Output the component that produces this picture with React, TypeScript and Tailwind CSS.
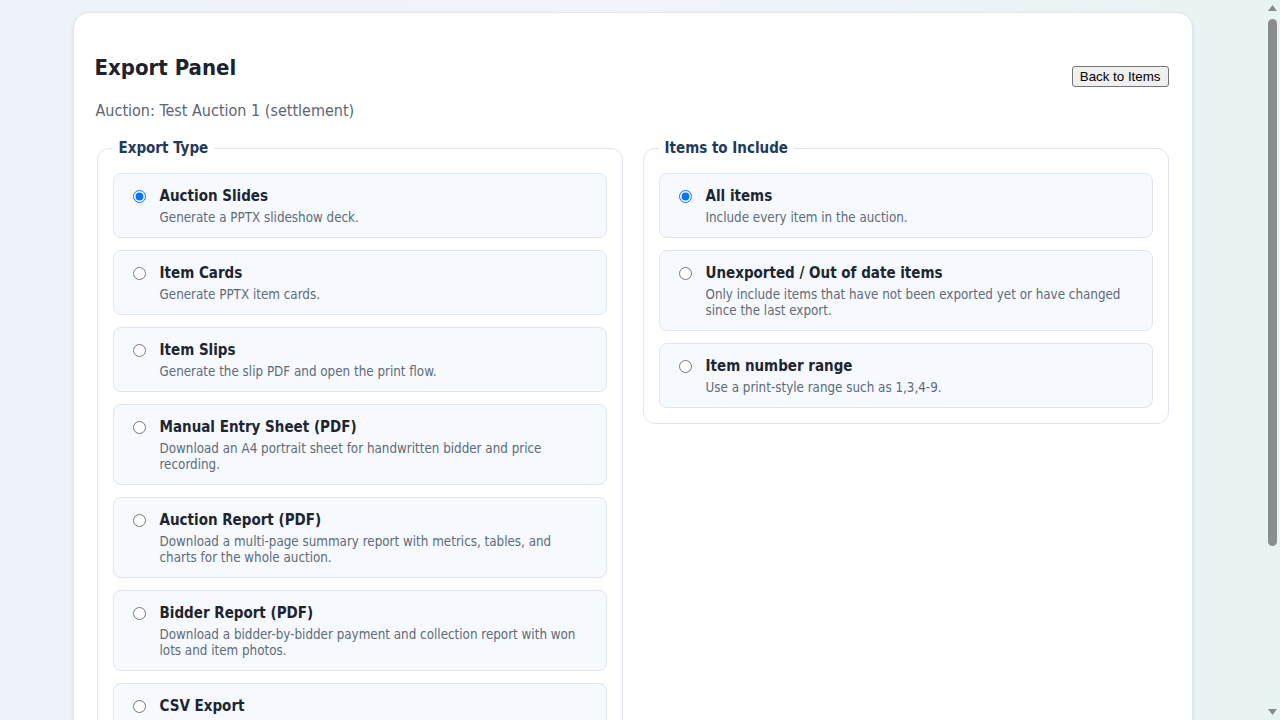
import { useState } from 'react';

type Option = {
    id: string;
    title: string;
    description: string;
};

const exportTypes: Option[] = [
    { id: 'slides', title: 'Auction Slides', description: 'Generate a PPTX slideshow deck.' },
    { id: 'cards', title: 'Item Cards', description: 'Generate PPTX item cards.' },
    { id: 'slips', title: 'Item Slips', description: 'Generate the slip PDF and open the print flow.' },
    {
        id: 'manual',
        title: 'Manual Entry Sheet (PDF)',
        description: 'Download an A4 portrait sheet for handwritten bidder and price recording.',
    },
    {
        id: 'report',
        title: 'Auction Report (PDF)',
        description: 'Download a multi-page summary report with metrics, tables, and charts for the whole auction.',
    },
    {
        id: 'bidders',
        title: 'Bidder Report (PDF)',
        description: 'Download a bidder-by-bidder payment and collection report with won lots and item photos.',
    },
    { id: 'csv', title: 'CSV Export', description: 'Download a CSV file of items, bidders and hammer prices.' },
];

const itemScopes: Option[] = [
    { id: 'all', title: 'All items', description: 'Include every item in the auction.' },
    {
        id: 'changed',
        title: 'Unexported / Out of date items',
        description: 'Only include items that have not been exported yet or have changed since the last export.',
    },
    { id: 'range', title: 'Item number range', description: 'Use a print-style range such as 1,3,4-9.' },
];

const OptionCard = ({
    name,
    option,
    checked,
    onSelect,
}: {
    name: string;
    option: Option;
    checked: boolean;
    onSelect: (id: string) => void;
}) => (
    <label className="flex gap-3.5 rounded-lg border border-[#dfe6ef] bg-[#f6f9fd] pt-3 pb-[11px] pl-[19px] pr-4 cursor-pointer">
        <input
            type="radio"
            name={name}
            checked={checked}
            onChange={() => onSelect(option.id)}
            className="mt-1 h-[13px] w-[13px] shrink-0"
        />
        <div className="min-w-0">
            <div className="text-[15px] leading-5 font-bold text-[#1d2530]">{option.title}</div>
            <div className="mt-1 text-[13.3px] leading-4 text-[#5f6b7a]">{option.description}</div>
        </div>
    </label>
);

const OptionGroup = ({
    legend,
    name,
    options,
    value,
    onChange,
}: {
    legend: string;
    name: string;
    options: Option[];
    value: string;
    onChange: (id: string) => void;
}) => (
    <fieldset className="rounded-xl border border-[#dfe5ec] p-[15px] self-start">
        <legend className="px-1.5 text-[15px] leading-5 font-bold text-[#1f3a5c]">{legend}</legend>
        <div className="flex flex-col gap-3">
            {options.map((option) => (
                <OptionCard
                    key={option.id}
                    name={name}
                    option={option}
                    checked={value === option.id}
                    onSelect={onChange}
                />
            ))}
        </div>
    </fieldset>
);

// Slim classic-style scrollbar rail shown beside the scrolling page
const ScrollRail = () => (
    <div className="flex w-[15px] shrink-0 flex-col items-center py-[5px]">
        <svg width="9" height="6" viewBox="0 0 9 6" className="shrink-0">
            <path d="M4.5 0 L9 6 L0 6 Z" fill="#8a8a8a" />
        </svg>
        <div className="mt-[8px] h-[527px] w-[9px] rounded-full bg-[#8c8c8c]" />
        <div className="flex-1" />
        <svg width="9" height="6" viewBox="0 0 9 6" className="shrink-0">
            <path d="M0 0 L9 0 L4.5 6 Z" fill="#8a8a8a" />
        </svg>
    </div>
);

export default function App() {
    const [exportType, setExportType] = useState('slides');
    const [scope, setScope] = useState('all');

    return (
        <div
            className="flex h-screen bg-gradient-to-r from-[#eef2f9] via-[#f1f4f9] to-[#e8f3f3] text-[#1d2530]"
            style={{ fontFamily: '"DejaVu Sans Condensed", "DejaVu Sans", sans-serif' }}
        >
            <main className="h-full min-w-0 flex-1 overflow-y-auto py-3">
                <div className="mx-auto max-w-[1120px] rounded-2xl border border-[#e1e7ee] bg-white px-[23px] pt-[39px] pb-[23px] shadow-sm">
                    {/* Header */}
                    <div className="flex items-start justify-between">
                        <h1 className="-ml-0.5 text-[22px] leading-8 font-bold text-[#1c232d]">Export Panel</h1>
                        <button
                            className="mt-[14px] rounded-[3px] border border-[#767676] bg-[#efefef] px-[7px] py-[2px] text-[13.33px] leading-[15px] text-black hover:bg-[#e5e5e5]"
                            style={{ fontFamily: '"Liberation Sans", Arial, sans-serif' }}
                        >
                            Back to Items
                        </button>
                    </div>
                    <p className="-ml-px mt-3 text-base leading-6 text-[#5b6573]">Auction: Test Auction 1 (settlement)</p>

                    {/* Option groups */}
                    <div className="mt-[15px] grid grid-cols-2 gap-5">
                        <OptionGroup
                            legend="Export Type"
                            name="export-type"
                            options={exportTypes}
                            value={exportType}
                            onChange={setExportType}
                        />
                        <OptionGroup
                            legend="Items to Include"
                            name="item-scope"
                            options={itemScopes}
                            value={scope}
                            onChange={setScope}
                        />
                    </div>

                    {/* Actions */}
                    <div className="mt-6 flex items-center gap-4">
                        <button className="h-10 rounded-lg bg-[#1f6feb] px-5 text-sm font-bold text-white">Run Export</button>
                        <span className="text-sm text-[#5f6b7a]">Exports are saved to the auction's export folder.</span>
                    </div>
                    <div className="mt-4 rounded-lg border border-[#dfe6ef] bg-[#f6f9fd] px-4 py-3 text-[13px] leading-5 text-[#5f6b7a]">
                        Last export: none yet for this auction.
                    </div>
                    <div className="h-9" />
                </div>
            </main>
            <ScrollRail />
        </div>
    );
}
